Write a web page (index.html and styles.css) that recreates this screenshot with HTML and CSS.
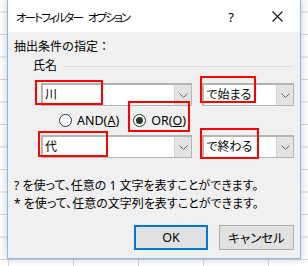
FILE: index.html
```html
<!DOCTYPE html>
<html lang="ja">
<head>
  <meta charset="UTF-8" />
  <title>オートフィルター オプション</title>
  <link rel="stylesheet" href="styles.css">
</head>
<body>

<div class="dialog">
  <div class="titlebar">
    <span class="title">オートフィルター オプション</span>
    <span class="tb-btn">?</span>
    <span class="tb-btn close">
      <svg width="11" height="11" viewBox="0 0 11 11"><path d="M0.5 0.5 L10.5 10.5 M10.5 0.5 L0.5 10.5" stroke="#111" stroke-width="1.1" fill="none"/></svg>
    </span>
  </div>

  <div class="dlg-body">
    <div class="caption">抽出条件の指定：</div>

    <div class="group-head">
      <span>氏名</span>
      <span class="group-line"></span>
    </div>

    <div class="cond-row">
      <div class="combo wide">
        <span class="combo-text">川</span>
        <span class="combo-btn"><svg width="9" height="5" viewBox="0 0 9 5"><path d="M0.5 0.5 L4.5 4.5 L8.5 0.5" stroke="#666" fill="none"/></svg></span>
      </div>
      <div class="combo narrow">
        <span class="combo-text">で始まる</span>
        <span class="combo-btn"><svg width="9" height="5" viewBox="0 0 9 5"><path d="M0.5 0.5 L4.5 4.5 L8.5 0.5" stroke="#666" fill="none"/></svg></span>
      </div>
    </div>

    <div class="radio-row">
      <label class="radio"><span class="dot"></span><span>AND(<u>A</u>)</span></label>
      <label class="radio checked"><span class="dot"></span><span>OR(<u>O</u>)</span></label>
    </div>

    <div class="cond-row">
      <div class="combo wide">
        <span class="combo-text">代</span>
        <span class="combo-btn"><svg width="9" height="5" viewBox="0 0 9 5"><path d="M0.5 0.5 L4.5 4.5 L8.5 0.5" stroke="#666" fill="none"/></svg></span>
      </div>
      <div class="combo narrow">
        <span class="combo-text">で終わる</span>
        <span class="combo-btn"><svg width="9" height="5" viewBox="0 0 9 5"><path d="M0.5 0.5 L4.5 4.5 L8.5 0.5" stroke="#666" fill="none"/></svg></span>
      </div>
    </div>

    <div class="help">
      <div>? を使って、任意の 1 文字を表すことができます。</div>
      <div>* を使って、任意の文字列を表すことができます。</div>
    </div>

    <div class="buttons">
      <button class="btn default">OK</button>
      <button class="btn">キャンセル</button>
    </div>
  </div>

  <!-- red annotation boxes -->
  <div class="mark m1"></div>
  <div class="mark m2"></div>
  <div class="mark m3"></div>
  <div class="mark m4"></div>
  <div class="mark m5"></div>
</div>

</body>
</html>
```

FILE: styles.css
```css
* { box-sizing: border-box; }

html, body { height: 100%; }

body {
  margin: 0;
  padding: 0 0 0 7px;
  overflow: hidden;
  font-family: "Noto Sans", "Noto Sans CJK JP", sans-serif;
  font-size: 12px;
  font-feature-settings: "palt";
  color: #000;
  background-color: #fff;
  background-image:
    linear-gradient(#d6d6d6 1px, transparent 1px),
    linear-gradient(90deg, #d6d6d6 1px, transparent 1px);
  background-size: 100% 22.5px, 65px 100%;
  background-position: 0 11.5px, 8px 0;
}

.dialog {
  position: relative;
  width: 294px;
  margin-top: -1px;
  border: 1px solid #86bcec;
  background: #f0f0f0;
  box-shadow: 0 0 8px rgba(0,0,0,0.22);
}

.titlebar {
  height: 32px;
  padding-top: 1px;
  background: #fff;
  display: flex;
  align-items: center;
}

.title {
  flex: 1;
  padding-left: 8px;
  font-size: 11.5px;
  letter-spacing: -1.9px;
  word-spacing: 5px;
}

.tb-btn {
  width: 46px;
  text-align: center;
  font-size: 13px;
  display: flex;
  justify-content: center;
}

.dlg-body {
  padding: 7px 6px 8px 6px;
}

.caption {
  line-height: 16px;
  font-feature-settings: normal;
}

.group-head {
  display: flex;
  align-items: center;
  margin: 3px 0 0 19px;
  line-height: 16px;
}

.group-line {
  flex: 1;
  margin-left: 6px;
  border-top: 1px solid #dcdcdc;
}

.cond-row {
  display: flex;
  gap: 10px;
  margin-left: 27px;
}

.group-head + .cond-row { margin-top: 9px; }

.combo {
  height: 23px;
  display: flex;
  background: #fff;
  border: 1px solid #b4b4b4;
  border-width: 2px 1px 1px 2px;
}

.combo.wide { width: 152px; }
.combo.narrow { width: 92px; }

.combo-text {
  flex: 1;
  padding-left: 2px;
  line-height: 20px;
}

.combo-btn {
  width: 17px;
  background: #e3e3e3;
  border-left: 1px solid #d0d0d0;
  display: flex;
  align-items: center;
  justify-content: center;
}

.radio-row {
  height: 29px;
  display: flex;
  align-items: center;
  padding-left: 45px;
}

.radio {
  display: flex;
  align-items: center;
  gap: 5px;
  font-size: 12.5px;
}

.radio + .radio { margin-left: 14px; }

.dot {
  width: 13px;
  height: 13px;
  border: 1px solid #333;
  border-radius: 50%;
  background: #fff;
  display: flex;
  align-items: center;
  justify-content: center;
}

.radio.checked .dot::after {
  content: "";
  width: 7px;
  height: 7px;
  border-radius: 50%;
  background: #333;
}

.help {
  margin-top: 19px;
  line-height: 18px;
}

.buttons {
  display: flex;
  justify-content: flex-end;
  gap: 11px;
  margin-top: 12px;
}

.btn {
  width: 75px;
  height: 25px;
  padding: 0;
  font: inherit;
  font-size: 12.5px;
  background: #e1e1e1;
  border: 1px solid #adadad;
  color: #000;
}

.btn.default {
  width: 74px;
  border: 2px solid #0078d7;
}

.mark {
  position: absolute;
  border: 2px solid #f00;
}

.m1 { left: 27px; top: 80px; width: 68px; height: 25px; }
.m2 { left: 192px; top: 76px; width: 56px; height: 27px; }
.m3 { left: 120px; top: 101px; width: 62px; height: 31px; }
.m4 { left: 30px; top: 131px; width: 70px; height: 26px; }
.m5 { left: 192px; top: 128px; width: 59px; height: 31px; }
```
